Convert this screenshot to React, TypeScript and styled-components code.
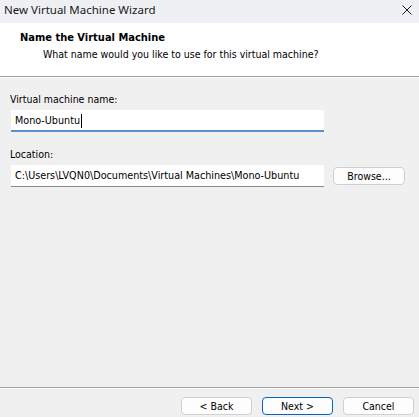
import styled, { createGlobalStyle } from 'styled-components';

const GlobalStyle = createGlobalStyle`
  html, body {
    margin: 0;
    padding: 0;
    background: #f0f0f0;
  }
  * {
    box-sizing: border-box;
  }
`;

const App = () => {
  return (
    <>
      <GlobalStyle />
      <Window>
        <TitleBar>
          <TitleText>New Virtual Machine Wizard</TitleText>
          <CloseButton>
            <svg width='10' height='10' viewBox='0 0 10 10'>
              <path d='M0.5 0.5 L9.5 9.5 M9.5 0.5 L0.5 9.5' stroke='#1a1a1a' strokeWidth='1' />
            </svg>
          </CloseButton>
        </TitleBar>

        <Header>
          <HeaderTitle>Name the Virtual Machine</HeaderTitle>
          <HeaderSubtitle>What name would you like to use for this virtual machine?</HeaderSubtitle>
        </Header>

        <Content>
          <Field>
            <Label>Virtual machine name:</Label>
            <Row>
              <TextBox $focused>
                Mono-Ubuntu
                <Caret />
              </TextBox>
            </Row>
          </Field>

          <Field>
            <Label>Location:</Label>
            <Row>
              <TextBox>C:\Users\LVQN0\Documents\Virtual Machines\Mono-Ubuntu</TextBox>
              <Button $width={72}>Browse...</Button>
            </Row>
          </Field>
        </Content>

        <Footer>
          <Button>&lt; Back</Button>
          <Button $primary>Next &gt;</Button>
          <Button>Cancel</Button>
        </Footer>
      </Window>
    </>
  );
};

const Window = styled.div`
  width: 419px;
  height: 417px;
  display: flex;
  flex-direction: column;
  background: #f0f0f0;
  font-family: 'DejaVu Sans Condensed', 'DejaVu Sans', sans-serif;
  font-size: 10.5px;
  color: #000;
  overflow: hidden;
`;

const TitleBar = styled.div`
  height: 23px;
  flex-shrink: 0;
  display: flex;
  align-items: center;
  justify-content: space-between;
  padding: 0 7px 4px 4px;
  background: #eff0f3;
`;

const TitleText = styled.span`
  font-family: 'Noto Sans', 'Open Sans', sans-serif;
  font-size: 11.5px;
  color: #1a1a1a;
`;

const CloseButton = styled.span`
  display: flex;
  align-items: center;
  justify-content: center;
  width: 10px;
  height: 10px;
`;

const Header = styled.div`
  height: 54px;
  flex-shrink: 0;
  background: #ffffff;
  padding: 8px 0 0 20px;
  border-bottom: 1px solid #a0a0a0;
  box-shadow: 0 1px 0 #ffffff;
`;

const HeaderTitle = styled.div`
  font-weight: bold;
  font-size: 11px;
  line-height: 14px;
  color: #000;
`;

const HeaderSubtitle = styled.div`
  margin-top: 2px;
  padding-left: 23px;
  line-height: 14px;
  color: #000;
`;

const Content = styled.div`
  flex: 1;
  display: flex;
  flex-direction: column;
  gap: 15px;
  padding: 15px 13px 0 11px;
  border-bottom: 1px solid #a0a0a0;
`;

const Field = styled.div`
  display: flex;
  flex-direction: column;
  gap: 4px;
`;

const Label = styled.div`
  line-height: 14px;
  margin-left: -1px;
`;

const Row = styled.div`
  display: flex;
  align-items: center;
  gap: 9px;
`;

const TextBox = styled.div<{ $focused?: boolean }>`
  width: 313px;
  height: 22px;
  display: flex;
  align-items: center;
  padding-left: 4px;
  background: #ffffff;
  white-space: nowrap;
  font-size: 10.7px;
  border-bottom: ${p => (p.$focused ? '2px solid #5b8fca' : '1px solid #8a8a8a')};
  padding-top: ${p => (p.$focused ? '1px' : '0')};
`;

const Caret = styled.span`
  display: inline-block;
  width: 1px;
  height: 14px;
  background: #000;
  margin-left: 1px;
`;

const Button = styled.div<{ $primary?: boolean; $width?: number }>`
  width: ${p => p.$width ?? 71}px;
  height: 18px;
  display: flex;
  align-items: center;
  justify-content: center;
  background: #fdfdfd;
  border: 1px solid ${p => (p.$primary ? '#0067c0' : '#d0d0d0')};
  border-radius: 4px;
  color: #000;
`;

const Footer = styled.div`
  height: 29px;
  flex-shrink: 0;
  display: flex;
  justify-content: flex-end;
  align-items: flex-start;
  gap: 10px;
  padding: 8px 5px 0 0;
  border-top: 1px solid #ffffff;
`;

export default App;
